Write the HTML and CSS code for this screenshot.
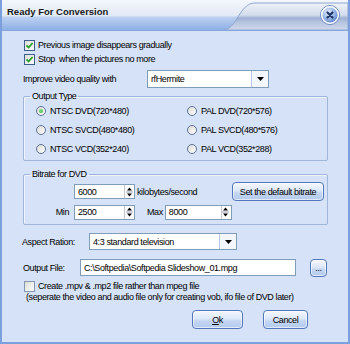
FILE: index.html
```html
<!DOCTYPE html>
<html lang="en">
	<head>
		<meta charset="UTF-8" />
		<title>Ready For Conversion</title>
		<link rel="stylesheet" href="styles.css">
	</head>
	<body>
		<div class="window">
			<div class="titlebar">
				<span class="title">Ready For Conversion</span>
				<svg class="tab" width="125" height="30" viewBox="0 0 125 30">
					<defs>
						<linearGradient id="tabg" x1="0" y1="0" x2="0" y2="1">
							<stop offset="0" stop-color="#eef2f8" />
							<stop offset="0.45" stop-color="#d3dcec" />
							<stop offset="0.56" stop-color="#9fb2d4" />
							<stop offset="0.72" stop-color="#b6c5e0" />
							<stop offset="1" stop-color="#cfdaed" />
						</linearGradient>
						<radialGradient id="closeg" cx="0.4" cy="0.35" r="0.7">
							<stop offset="0" stop-color="#e8f0fc" />
							<stop offset="0.6" stop-color="#90b0e3" />
							<stop offset="1" stop-color="#4d74bf" />
						</radialGradient>
					</defs>
					<path d="M0 30 C14 30 16 3 32 3 L125 3 L125 30 Z" fill="url(#tabg)" stroke="#8ea6cf" />
					<circle cx="107" cy="15" r="9.5" fill="none" stroke="#6d8cc4" />
					<circle cx="107" cy="15" r="8.3" fill="url(#closeg)" stroke="#ffffff" stroke-width="1.4" />
					<path d="M104.5 12.5 L109.5 17.5 M109.5 12.5 L104.5 17.5" stroke="#1f3566" stroke-width="2.2" stroke-linecap="round" />
				</svg>
			</div>
			<div class="content">
				<label class="check-row">
					<span class="checkbox checked">
						<svg width="9" height="9" viewBox="0 0 9 9"><path d="M1.5 4.3 L3.6 6.5 L7.6 2" fill="none" stroke="#21a121" stroke-width="1.8" /></svg>
					</span>
					Previous image disappears gradually
				</label>
				<label class="check-row">
					<span class="checkbox checked">
						<svg width="9" height="9" viewBox="0 0 9 9"><path d="M1.5 4.3 L3.6 6.5 L7.6 2" fill="none" stroke="#21a121" stroke-width="1.8" /></svg>
					</span>
					Stop&nbsp; when the pictures no more
				</label>
				<div class="quality-row">
					<span class="quality-label">Improve video quality with</span>
					<div class="select quality-select">
						<span class="select-text">rfHermite</span>
						<span class="select-btn">
							<svg width="7" height="4" viewBox="0 0 7 4"><path d="M0 0 L7 0 L3.5 4 Z" fill="#000" /></svg>
						</span>
					</div>
				</div>

				<fieldset class="group output-type">
					<legend>Output Type</legend>
					<div class="radio-grid">
						<label class="radio-row"><span class="radio checked"><span class="dot"></span></span>NTSC DVD(720*480)</label>
						<label class="radio-row"><span class="radio"></span>PAL DVD(720*576)</label>
						<label class="radio-row"><span class="radio"></span>NTSC SVCD(480*480)</label>
						<label class="radio-row"><span class="radio"></span>PAL SVCD(480*576)</label>
						<label class="radio-row"><span class="radio"></span>NTSC VCD(352*240)</label>
						<label class="radio-row"><span class="radio"></span>PAL VCD(352*288)</label>
					</div>
				</fieldset>

				<fieldset class="group bitrate">
					<legend>Bitrate for DVD</legend>
					<div class="bitrate-row first">
						<span class="bitrate-label"></span>
						<div class="spin">
							<span class="spin-text">6000</span>
							<span class="spin-btn">
								<svg width="7" height="12" viewBox="0 0 7 12"><path d="M3.5 1.5 L6 4.5 L1 4.5 Z M1 7.5 L6 7.5 L3.5 10.5 Z" fill="#000" /><path d="M0 6 H7" stroke="#9aa4b4" /></svg>
							</span>
						</div>
						<span class="unit">kilobytes/second</span>
						<button class="btn default-btn">Set the default bitrate</button>
					</div>
					<div class="bitrate-row">
						<span class="bitrate-label">Min</span>
						<div class="spin">
							<span class="spin-text">2500</span>
							<span class="spin-btn">
								<svg width="7" height="12" viewBox="0 0 7 12"><path d="M3.5 1.5 L6 4.5 L1 4.5 Z M1 7.5 L6 7.5 L3.5 10.5 Z" fill="#000" /><path d="M0 6 H7" stroke="#9aa4b4" /></svg>
							</span>
						</div>
						<span class="max-label">Max</span>
						<div class="spin spin-max">
							<span class="spin-text">8000</span>
							<span class="spin-btn">
								<svg width="7" height="12" viewBox="0 0 7 12"><path d="M3.5 1.5 L6 4.5 L1 4.5 Z M1 7.5 L6 7.5 L3.5 10.5 Z" fill="#000" /><path d="M0 6 H7" stroke="#9aa4b4" /></svg>
							</span>
						</div>
					</div>
				</fieldset>

				<div class="aspect-row">
					<span class="aspect-label">Aspect Ration:</span>
					<div class="select aspect-select">
						<span class="select-text">4:3 standard television</span>
						<span class="select-btn">
							<svg width="7" height="4" viewBox="0 0 7 4"><path d="M0 0 L7 0 L3.5 4 Z" fill="#000" /></svg>
						</span>
					</div>
				</div>

				<div class="file-row">
					<span class="file-label">Output File:</span>
					<div class="text-input">C:\Softpedia\Softpedia Slideshow_01.mpg</div>
					<button class="btn browse-btn">...</button>
				</div>

				<label class="check-row create-row">
					<span class="checkbox"></span>
					Create .mpv &amp; .mp2 file rather than mpeg file
				</label>
				<div class="note">(seperate the video and audio file only for creating vob, ifo file of DVD later)</div>

				<div class="actions">
					<button class="btn ok-btn"><u>O</u>k</button>
					<button class="btn cancel-btn">Cancel</button>
				</div>
			</div>
		</div>
	</body>
</html>
```

FILE: styles.css
```css
body {
	margin: 0;
	font-family: "Liberation Sans", Arial, sans-serif;
	font-size: 9px;
	letter-spacing: -0.4px;
	color: #000;
}
.window {
	width: 350px;
	height: 344px;
	box-sizing: border-box;
	border: 2px solid #7c9fdd;
	border-top: 0;
	background: #d5e2f7;
	display: flex;
	flex-direction: column;
	overflow: hidden;
}
.titlebar {
	height: 30px;
	flex: none;
	display: flex;
	border-bottom: 1px solid #86a6dc;
	background: linear-gradient(to bottom, #f4f7fc 0, #e1e9f6 16px, #bdd1f1 17px, #8db0e6 30px);
}
.title {
	font-weight: bold;
	font-size: 9.5px;
	letter-spacing: 0;
	line-height: 12px;
	margin: 6px 0 0 5px;
	color: #1a1a1a;
}
.tab {
	margin-left: auto;
	display: block;
}
.content {
	display: flex;
	flex-direction: column;
	padding: 7px 0 0 21px;
}
.check-row {
	display: flex;
	align-items: center;
	height: 14px;
	padding-left: 1px;
}
.checkbox {
	width: 11px;
	height: 11px;
	box-sizing: border-box;
	border: 1px solid #3e5f8e;
	background: linear-gradient(135deg, #dcdcd6, #ffffff);
	display: flex;
	align-items: center;
	justify-content: center;
	margin-right: 3px;
	flex: none;
}
.quality-row {
	display: flex;
	align-items: center;
	height: 18px;
	margin-top: 4px;
}
.quality-label {
	width: 124px;
}
.select {
	display: flex;
	align-items: stretch;
	box-sizing: border-box;
	border: 1px solid #7f9db9;
	background: #fff;
}
.select-text {
	flex: 1;
	padding-left: 3px;
	display: flex;
	align-items: center;
}
.select-btn {
	width: 16px;
	border-left: 1px solid #b7c8e4;
	background: #f3f6fb;
	display: flex;
	align-items: center;
	justify-content: center;
}
.quality-select {
	width: 122px;
	height: 18px;
}
.group {
	margin: 0;
	padding: 0;
	width: 305px;
	box-sizing: border-box;
	border: 1px solid #9fb5da;
	box-shadow: inset 1px 1px 0 #eef3fc;
	border-radius: 2px;
	min-width: 0;
}
.group legend {
	margin-left: 6px;
	padding: 0 2px;
	line-height: 10px;
}
.output-type {
	margin-top: 3px;
	padding-bottom: 2px;
}
.radio-grid {
	display: grid;
	grid-template-columns: 151px 1fr;
	grid-auto-rows: 19px;
	padding-left: 12px;
}
.radio-row {
	display: flex;
	align-items: center;
}
.radio {
	width: 10px;
	height: 10px;
	box-sizing: border-box;
	border: 1px solid #5d7297;
	border-radius: 50%;
	background: linear-gradient(135deg, #dcdcd6, #ffffff);
	display: flex;
	align-items: center;
	justify-content: center;
	margin-right: 4px;
	flex: none;
}
.dot {
	width: 4px;
	height: 4px;
	border-radius: 50%;
	background: radial-gradient(circle at 40% 40%, #8ee88e, #21a121);
}
.bitrate {
	margin-top: 8px;
	padding-bottom: 4px;
}
.bitrate-row {
	display: flex;
	align-items: center;
	height: 16px;
	margin-top: 3px;
	padding-right: 3px;
}
.bitrate-row.first {
	height: 19px;
}
.bitrate-label {
	width: 50px;
	box-sizing: border-box;
	padding-right: 5px;
	text-align: right;
}
.spin {
	width: 61px;
	height: 15px;
	box-sizing: border-box;
	border: 1px solid #7f9db9;
	background: #fff;
	display: flex;
	align-items: stretch;
}
.spin-text {
	flex: 1;
	padding-left: 3px;
	display: flex;
	align-items: center;
}
.spin-btn {
	width: 8px;
	margin: 0 1px 0 0;
	border-left: 1px solid #c3c9d3;
	display: flex;
	align-items: center;
	justify-content: center;
}
.spin-max {
	width: 67px;
}
.unit {
	margin-left: 2px;
}
.max-label {
	margin: 0 2px 0 12px;
}
.btn {
	font-family: inherit;
	font-size: 9px;
	letter-spacing: inherit;
	white-space: nowrap;
	color: #000;
	padding: 0;
	box-sizing: border-box;
	border: 1px solid #5277bb;
	border-radius: 4px;
	background: linear-gradient(to bottom, #f6f9ff 0, #dce7f8 45%, #c3d5f2 60%, #b4cbef 100%);
	box-shadow: inset 0 0 0 1px rgba(255, 255, 255, 0.6);
	cursor: pointer;
}
.default-btn {
	margin-left: auto;
	width: 92px;
	height: 19px;
}
.aspect-row {
	display: flex;
	align-items: center;
	height: 17px;
	margin-top: 8px;
}
.aspect-label {
	width: 67px;
	margin-left: -1px;
}
.aspect-select {
	width: 148px;
	height: 17px;
}
.file-row {
	display: flex;
	align-items: center;
	height: 19px;
	margin-top: 8px;
}
.file-label {
	width: 57px;
}
.text-input {
	width: 216px;
	height: 17px;
	box-sizing: border-box;
	border: 1px solid #7f9db9;
	background: #fff;
	padding-left: 3px;
	display: flex;
	align-items: center;
}
.browse-btn {
	margin-left: 14px;
	width: 17px;
	height: 18px;
	line-height: 10px;
}
.create-row {
	height: 12px;
	margin-top: 3px;
}
.create-row .checkbox {
	border-color: #8596b2;
}
.note {
	line-height: 11px;
	padding-left: 3px;
	white-space: nowrap;
}
.actions {
	display: flex;
	justify-content: flex-end;
	gap: 20px;
	margin-top: 7px;
	width: 285px;
}
.ok-btn {
	width: 51px;
	height: 19px;
}
.cancel-btn {
	width: 45px;
	height: 19px;
}
```
